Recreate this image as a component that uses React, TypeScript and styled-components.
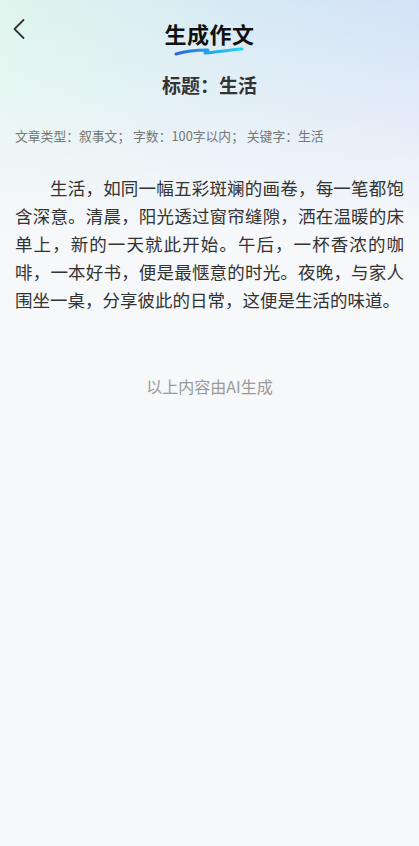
import React from "react";
import styled, { createGlobalStyle } from "styled-components";

const GlobalStyle = createGlobalStyle`
  html, body {
    margin: 0;
    padding: 0;
    background: #f7f8fa;
  }
  body {
    font-family: "Noto Sans CJK SC", "Noto Sans", sans-serif;
  }
`;

const meta = "文章类型：叙事文； 字数：100字以内； 关键字：生活";

const essay =
  "生活，如同一幅五彩斑斓的画卷，每一笔都饱含深意。清晨，阳光透过窗帘缝隙，洒在温暖的床单上，新的一天就此开始。午后，一杯香浓的咖啡，一本好书，便是最惬意的时光。夜晚，与家人围坐一桌，分享彼此的日常，这便是生活的味道。";

const App: React.FunctionComponent = () => {
  return (
    <>
      <GlobalStyle />
      <Page>
        <NavBar>
          <BackButton aria-label="返回">
            <svg width="14" height="22" viewBox="0 0 14 22" fill="none">
              <path
                d="M11.5 2 L2.5 11 L11.5 20"
                stroke="#333"
                strokeWidth="1.8"
                strokeLinecap="round"
                strokeLinejoin="round"
              />
            </svg>
          </BackButton>
          <NavTitle>
            生成作文
            <Squiggle width="70" height="10" viewBox="0 0 70 10">
              <defs>
                <linearGradient id="sq" x1="0" y1="0" x2="1" y2="0">
                  <stop offset="0" stopColor="#2f63e0" />
                  <stop offset="0.5" stopColor="#1fa6ee" />
                  <stop offset="1" stopColor="#27d3f2" />
                </linearGradient>
              </defs>
              <path
                d="M2 8 C12 5 24 4 34 4 L31 7 C42 6 56 4 68 3"
                stroke="url(#sq)"
                strokeWidth="3"
                strokeLinecap="round"
                strokeLinejoin="round"
                fill="none"
              />
            </Squiggle>
          </NavTitle>
        </NavBar>

        <Heading>标题：生活</Heading>
        <Meta>{meta}</Meta>
        <Essay>{essay}</Essay>
        <Notice>以上内容由AI生成</Notice>
      </Page>
    </>
  );
};

export default App;

const Page = styled.div`
  min-height: 846px;
  background:
    linear-gradient(180deg, rgba(247, 248, 250, 0) 0px, #f7f8fa 240px),
    linear-gradient(100deg, #def6ec 0%, #d6eaf4 50%, #d2e0f8 100%);
  background-repeat: no-repeat;
  background-size: 100% 260px, 100% 260px;
  background-color: #f7f8fa;
  display: flex;
  flex-direction: column;
`;

const NavBar = styled.div`
  position: relative;
  height: 60px;
  display: flex;
  align-items: center;
  justify-content: center;
  padding-bottom: 8px;
  box-sizing: border-box;
`;

const BackButton = styled.button`
  position: absolute;
  left: 12px;
  top: 18px;
  border: none;
  background: none;
  padding: 0;
  display: flex;
  cursor: pointer;
`;

const NavTitle = styled.div`
  position: relative;
  font-size: 22px;
  font-weight: 700;
  color: #111;
  line-height: 30px;
  margin-top: 13px;
  letter-spacing: 0.5px;
`;

const Squiggle = styled.svg`
  position: absolute;
  left: 10px;
  bottom: -8px;
`;

const Heading = styled.h1`
  margin: 11px 0 0;
  text-align: center;
  font-size: 19px;
  font-weight: 700;
  color: #333;
  line-height: 28px;
`;

const Meta = styled.div`
  margin-top: 28px;
  padding: 0 15px;
  font-size: 12.8px;
  color: #777;
  line-height: 18px;
  white-space: pre;
`;

const Essay = styled.p`
  margin: 29px 0 0;
  padding: 0 15px;
  font-size: 17.5px;
  line-height: 28px;
  color: #333;
  text-indent: 2em;
  text-align: justify;
`;

const Notice = styled.div`
  margin-top: 60px;
  text-align: center;
  font-size: 16px;
  color: #999;
  line-height: 24px;
`;
